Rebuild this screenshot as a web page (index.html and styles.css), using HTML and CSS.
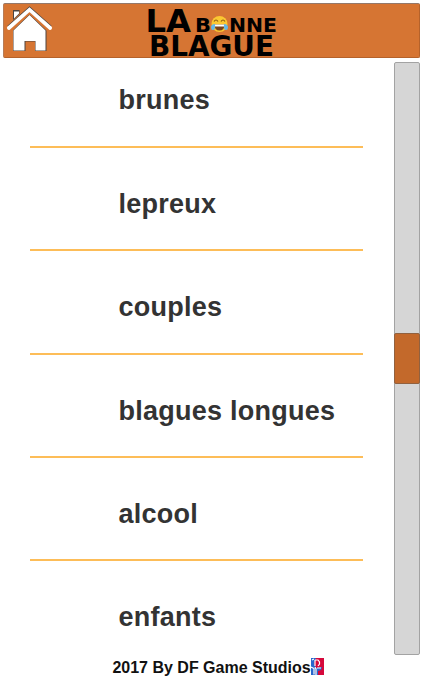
FILE: index.html
```html
<!DOCTYPE html>
<html lang="fr">
<head>
<meta charset="utf-8">
<title>La Bonne Blague</title>
<link rel="stylesheet" href="styles.css">
</head>
<body>
<header class="bar">
  <svg class="home" width="48" height="48" viewBox="0 0 48 48">
    <path class="shade" d="M8 5h6.500v4L8 15zM24.500 9L41.500 25.500v20.500H30V36.500H20.500v9.500H8V25.500z"/>
    <path class="fill" d="M9 6.500h5v2l-5 5zM24.500 10L40.500 25.500v20H30.500V36H19.500v9.500H8.500V25.500z"/>
    <path class="gap" d="M6 24.700L24.500 7.900 43 24.700"/>
    <path class="roof-edge" d="M3.800 22.300L24.500 4 45.200 22.300"/>
    <path class="roof" d="M3.800 23L24.500 4.700 45.200 23"/>
  </svg>
  <svg class="logo" width="134" height="55" viewBox="0 0 134 55">
    <text class="large" x="1.500" y="28.500" textLength="45.500" lengthAdjust="spacingAndGlyphs">LA</text>
    <text class="small" x="51" y="28.500" textLength="16" lengthAdjust="spacingAndGlyphs">B</text>
    <text class="small" x="85" y="28.500" textLength="48" lengthAdjust="spacingAndGlyphs">NNE</text>
    <text class="medium" x="5" y="53.300" textLength="125" lengthAdjust="spacingAndGlyphs">BLAGUE</text>
    <circle cx="75.500" cy="21" r="8" fill="#fbc832"/>
    <path d="M70 18.500q2-3 4 0M77 18.500q2-3 4 0" fill="none" stroke="#8a5a18" stroke-width="1.200"/>
    <path d="M70.500 21.500h10q0 6-5 6t-5-6z" fill="#79441c"/>
    <path d="M71 21.500h9v2h-9z" fill="#fff"/>
    <path d="M71 21q-4 0-4 3.500 0 3 2.500 2.500 2-.5 1.500-6zM80 21q4 0 4 3.500 0 3-2.500 2.500-2-.5-1.500-6z" fill="#65b9e8"/>
  </svg>
</header>
<main class="content">
  <ul class="list">
    <li>brunes</li>
    <li>lepreux</li>
    <li>couples</li>
    <li>blagues longues</li>
    <li>alcool</li>
    <li>enfants</li>
  </ul>
  <div class="track"><div class="thumb"></div></div>
</main>
<footer class="footer">
  <span>2017 By DF Game Studios</span>
  <svg width="13" height="17" viewBox="0 0 13 17">
    <path d="M0 0h13v17H0z" fill="#d5083b"/>
    <path d="M0 0h5L3 5l2 5-1 7H0z" fill="#2868cd"/>
    <path d="M5 10l6-1-1 3-3 1v4H4z" fill="#2868cd"/>
    <path d="M4 2h3l1.500 2v2L7 8M4 2v6M0 9l3 1.500v6M4 9l1 2v6M6 10h4M1 2l2-1" fill="none" stroke="#fff" stroke-width="1.200"/>
  </svg>
</footer>
</body>
</html>
```

FILE: styles.css
```css
* { box-sizing: border-box; }
body {
  margin: 0;
  width: 423px;
  height: 678px;
  overflow: hidden;
  background: #fff;
  font-family: "Liberation Sans", sans-serif;
  font-weight: bold;
  display: flex;
  flex-direction: column;
}
.bar {
  height: 55px;
  margin: 3px 3px 0;
  background: #d67533;
  border: 1px solid #b5622b;
  border-top-color: #94786a;
  border-left-color: #b77c58;
  border-radius: 2px;
  display: flex;
  flex: none;
}
.home { margin: 1px 0 0 1px; flex: none; }
.shade { fill: #4c4541; }
.fill { fill: #fff; }
.gap { fill: none; stroke: #d67533; stroke-width: 2.500; }
.roof-edge { fill: none; stroke: #4c4541; stroke-width: 4; }
.roof { fill: none; stroke: #fff; stroke-width: 3.700; stroke-linecap: round; }
.logo {
  margin: -1px 0 0 91px;
  flex: none;
  overflow: visible;
  font-family: "DejaVu Sans", sans-serif;
}
.large { font-size: 32.5px; }
.small { font-size: 19.5px; }
.medium { font-size: 27.5px; }
.content {
  display: flex;
  justify-content: space-between;
  height: 594px;
  margin: 4px 3px 0 30px;
  flex: none;
}
.list {
  list-style: none;
  margin: 0;
  padding: 0;
  width: 333px;
  height: 594px;
  overflow: hidden;
}
.list li {
  height: 103.35px;
  padding: 40px 0 0 88.4px;
  border-bottom: 2px solid #fdbd58;
  font-size: 27px;
  line-height: 32px;
  letter-spacing: 0.25px;
  color: #333;
  white-space: nowrap;
}
.list li:first-child { height: 86px; padding-top: 22px; }
.list li:last-child { border: 0; }
.track {
  width: 26px;
  height: 593px;
  padding-top: 270px;
  background: #d6d6d6;
  border: 1px solid #a3a3a3;
  border-radius: 2px;
}
.thumb {
  height: 51px;
  margin: 0 -1px;
  background: #c3692b;
  border: 1px solid #91613f;
  border-radius: 2px;
}
.footer {
  display: flex;
  padding: 2px 0 0 112.4px;
  font-size: 16px;
  line-height: 19px;
  color: #111;
  white-space: nowrap;
}
.footer span { width: 198.6px; }
```
